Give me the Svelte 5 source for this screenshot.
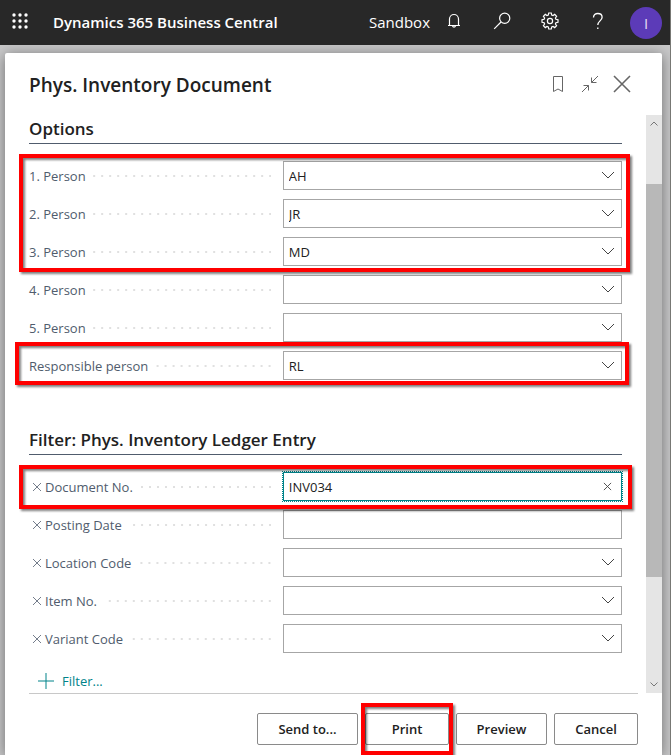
<script>
  const people = $state([
    { id: 'person1', label: '1. Person', value: 'AH' },
    { id: 'person2', label: '2. Person', value: 'JR' },
    { id: 'person3', label: '3. Person', value: 'MD' },
    { id: 'person4', label: '4. Person', value: '' },
    { id: 'person5', label: '5. Person', value: '' },
    { id: 'responsible', label: 'Responsible person', value: 'RL' }
  ]);
  const filters = $state([
    { id: 'posting', label: 'Posting Date', value: '', type: 'text' },
    { id: 'location', label: 'Location Code', value: '', type: 'select' },
    { id: 'item', label: 'Item No.', value: '', type: 'select' },
    { id: 'variant', label: 'Variant Code', value: '', type: 'select' }
  ]);
  let documentNo = $state('INV034');
  const codes = ['', 'AH', 'JR', 'MD', 'RL'];
</script>

{#snippet cross(size)}
  <svg width={size} height={size} viewBox="0 0 10 10" aria-hidden="true"><path d="M1 1l8 8M9 1L1 9" /></svg>
{/snippet}

{#snippet dropdown(field, options)}
  <span class="control">
    <select id={field.id} bind:value={field.value}>
      {#each options as option}<option value={option}>{option}</option>{/each}
    </select>
    <svg class="chevron" width="14" height="8" viewBox="0 0 14 8" aria-hidden="true"><path d="M1 1l6 6 6-6" /></svg>
  </span>
{/snippet}

{#snippet personRow(field)}
  <div class="row">
    <label for={field.id}>{field.label}</label>
    <span class="leader"></span>
    {@render dropdown(field, codes)}
  </div>
{/snippet}

<div class="app">
  <header class="topbar">
    <button class="waffle" aria-label="App launcher">
      <svg width="16" height="16" viewBox="0 0 16 16" aria-hidden="true">
        {#each [2, 8, 14] as y}{#each [2, 8, 14] as x}<circle cx={x} cy={y} r="1.7" />{/each}{/each}
      </svg>
    </button>
    <a class="brand" href="#home">Dynamics 365 Business Central</a>
    <span class="environment">Sandbox</span>
    <nav class="tools">
      <button aria-label="Notifications">
        <svg width="16" height="18" viewBox="0 0 16 18"><path d="M3.500 13V7a4.500 4.500 0 0 1 9 0v6M2 13.500h12M6.500 14a1.600 1.600 0 0 0 3 0" /></svg>
      </button>
      <button aria-label="Search">
        <svg width="18" height="18" viewBox="0 0 18 18"><circle cx="11.700" cy="6.300" r="5.100" /><path d="M8 10L1.200 16.800" /></svg>
      </button>
      <button aria-label="Settings">
        <svg width="18" height="18" viewBox="0 0 18 18">
          <path d="M7.700 1h2.600l.4 2.100 1.300.5 1.700-1.200 1.900 1.900-1.200 1.700.5 1.300 2.100.4v2.600l-2.100.4-.5 1.300 1.200 1.700-1.900 1.900-1.700-1.200-1.300.5-.4 2.100H7.700l-.4-2.100-1.300-.5-1.700 1.200-1.900-1.900 1.200-1.700-.5-1.300L1 10.300V7.700l2.100-.4.5-1.300-1.200-1.700 1.900-1.900L6 3.600l1.300-.5z" />
          <circle cx="9" cy="9" r="2.600" />
        </svg>
      </button>
      <button aria-label="Help">
        <svg width="12" height="18" viewBox="0 0 12 18"><path stroke-width="1.300" d="M1.500 5.500C1.500 3 3.300 1.500 5.800 1.500s4.300 1.500 4.300 3.700c0 3.600-4.300 3.800-4.300 7.800M5.800 15.500v1.500" /></svg>
      </button>
      <button aria-label="Account"><span class="avatar">I</span></button>
    </nav>
  </header>

  <div class="backdrop">
    <section class="dialog" aria-labelledby="dialog-title">
      <div class="titlebar">
        <h1 id="dialog-title">Phys. Inventory Document</h1>
        <button aria-label="Bookmark">
          <svg width="16" height="18" viewBox="0 0 16 18"><path d="M3.500 1.500h9v15L8 14l-4.500 2.500z" /></svg>
        </button>
        <button aria-label="Collapse">
          <svg width="18" height="18" viewBox="0 0 18 18"><path d="M17 1l-6.500 6.500M10.500 2.500v5h5M1 17l6.500-6.500M2.500 10.500h5v5" /></svg>
        </button>
        <button class="close" aria-label="Close">{@render cross(20)}</button>
      </div>

      <div class="scroller">
        <div class="content">
          <h2>Options</h2>
          <div class="fields">
            <div class="fields mark mark-people">
              {#each people.slice(0, 3) as field}{@render personRow(field)}{/each}
            </div>
            {#each people.slice(3, 5) as field}{@render personRow(field)}{/each}
            <div class="mark mark-responsible">{@render personRow(people[5])}</div>
          </div>

          <h2 class="second">Filter: Phys. Inventory Ledger Entry</h2>
          <div class="fields">
            <div class="row mark mark-document">
              <button class="remove" aria-label="Remove Document No. filter">{@render cross(10)}</button>
              <label for="document">Document No.</label>
              <span class="leader"></span>
              <span class="control active">
                <input id="document" type="text" bind:value={documentNo} />
                <button class="clear" aria-label="Clear" onclick={() => (documentNo = '')}>{@render cross(9)}</button>
              </span>
            </div>
            {#each filters as field}
              <div class="row">
                <button class="remove" aria-label="Remove {field.label} filter">{@render cross(10)}</button>
                <label for={field.id}>{field.label}</label>
                <span class="leader"></span>
                {#if field.type === 'text'}
                  <span class="control"><input id={field.id} type="text" bind:value={field.value} /></span>
                {:else}
                  {@render dropdown(field, [''])}
                {/if}
              </div>
            {/each}
          </div>
          <button class="add">
            <svg width="16" height="16" viewBox="0 0 16 16" aria-hidden="true"><path d="M8 0v16M0 8h16" /></svg>
            Filter...
          </button>
        </div>
        <div class="scrollbar" aria-hidden="true">
          <svg width="8" height="5" viewBox="0 0 8 5"><path d="M0.500 4.500L4 1l3.500 3.500" /></svg>
          <div class="track"><div class="before"></div><div class="thumb"></div><div class="after"></div></div>
          <svg width="8" height="5" viewBox="0 0 8 5"><path d="M0.500 0.500L4 4l3.500-3.500" /></svg>
        </div>
      </div>

      <footer>
        <button class="wide">Send to...</button>
        <span class="mark mark-print"><button>Print</button></span>
        <button class="medium">Preview</button>
        <button>Cancel</button>
      </footer>
    </section>
  </div>
</div>

<style>
  :global(body) {
    background: #777874;
  }
  .app {
    display: flex;
    flex-direction: column;
    min-height: 100vh;
    margin-right: 1px;
    overflow: hidden;
    font: 13px/20px 'Open Sans', 'Noto Sans', sans-serif;
    color: #212121;
  }
  .app,
  .app *,
  .app *::after {
    box-sizing: border-box;
  }
  button {
    display: flex;
    align-items: center;
    justify-content: center;
    padding: 0;
    border: 0;
    background: none;
    color: inherit;
    font: inherit;
    cursor: pointer;
  }
  svg {
    display: block;
    flex: none;
    fill: none;
    stroke: currentColor;
  }
  .topbar {
    display: flex;
    align-items: center;
    height: 45px;
    flex: none;
    padding-bottom: 2px;
    background: #282828;
    color: #fff;
  }
  .waffle {
    width: 40px;
    height: 42px;
    align-self: flex-start;
  }
  .waffle svg {
    fill: #fff;
    stroke: none;
  }
  .brand {
    margin-left: 13px;
    font-size: 15px;
    font-weight: 600;
    color: #fff;
    text-decoration: none;
  }
  .environment {
    margin-left: auto;
    font-size: 15px;
  }
  .tools {
    display: flex;
    align-items: center;
    align-self: flex-start;
  }
  .tools button {
    width: 48px;
    height: 42px;
  }
  .tools svg {
    stroke-width: 1.2;
  }
  .avatar {
    width: 32px;
    height: 32px;
    margin-top: 4px;
    border-radius: 50%;
    background: #5c3bb8;
    line-height: 32px;
    font-size: 15px;
    text-align: center;
    color: #e4dcf5;
  }
  .backdrop {
    display: flex;
    flex: 1;
    padding: 8px 8px 0 5px;
    background: #c8c8c9;
    overflow: hidden;
  }
  .dialog {
    display: flex;
    flex: 1;
    flex-direction: column;
    min-width: 0;
    border-radius: 2px 2px 0 0;
    background: #fff;
    box-shadow: 0 2px 14px rgba(0, 0, 0, 0.45);
  }
  .titlebar {
    display: flex;
    align-items: center;
    height: 62px;
    flex: none;
    padding: 0 24px;
    color: #666;
  }
  .titlebar button {
    width: 32px;
    height: 32px;
  }
  .close svg {
    stroke-width: 0.8;
  }
  h1 {
    flex: 1;
    margin: 0;
    padding-top: 2px;
    font-size: 19px;
    line-height: 28px;
    font-weight: 600;
    color: #212121;
  }
  .scroller {
    display: flex;
    flex: 1;
  }
  .content {
    flex: 1;
    min-width: 0;
    padding: 0 24px;
  }
  h2 {
    margin: 0 0 17px;
    border-bottom: 1px solid #505c6d;
    font-size: 17px;
    line-height: 28px;
    font-weight: 600;
  }
  .second {
    margin-top: 46px;
  }
  .fields {
    display: flex;
    flex-direction: column;
    gap: 9px;
  }
  .row {
    display: flex;
    align-items: center;
    height: 29px;
  }
  label {
    color: #505c6d;
  }
  .leader {
    flex: 1;
    height: 2px;
    margin: 0 12px 0 7px;
    background: linear-gradient(to right, transparent 6px, #e0e0e0 6px) right / 8px 2px repeat-x;
  }
  .control {
    display: flex;
    position: relative;
    width: 57.2%;
    height: 29px;
  }
  select,
  input {
    flex: 1;
    min-width: 0;
    margin: 0;
    padding: 0 24px 0 5px;
    appearance: none;
    border: 1px solid #a6a6a6;
    border-radius: 0;
    outline: none;
    background: #fff;
    color: #212121;
    font: inherit;
  }
  .chevron {
    position: absolute;
    top: 10px;
    right: 7px;
    pointer-events: none;
    color: #444;
  }
  .active input {
    border-color: #00838a;
    outline: 1px dotted #00838a;
  }
  .clear {
    position: absolute;
    top: 5px;
    right: 5px;
    width: 19px;
    height: 19px;
    color: #444;
  }
  .remove {
    width: 16px;
    height: 24px;
    color: #505c6d;
  }
  .remove svg {
    stroke-width: 0.8;
  }
  .add {
    gap: 8px;
    height: 24px;
    margin: 16px 0 0 9px;
    color: #00838a;
  }
  .scrollbar {
    display: flex;
    flex-direction: column;
    align-items: center;
    width: 16px;
    padding: 6px 0;
    background: #e5e5e5;
    color: #777;
  }
  .track {
    display: flex;
    flex: 1;
    flex-direction: column;
    width: 16px;
  }
  .before {
    flex: 58;
  }
  .thumb {
    flex: 393;
    background: #b8b8b8;
  }
  .after {
    flex: 105;
  }
  footer {
    display: flex;
    justify-content: flex-end;
    gap: 7px;
    height: 62px;
    flex: none;
    margin: 0 24px;
    padding-top: 19px;
    border-top: 1px solid #c8c8c8;
  }
  footer button {
    width: 84px;
    height: 32px;
    border: 1px solid #8a8a8a;
    border-radius: 2px;
    font-weight: 600;
  }
  footer .medium {
    width: 91px;
  }
  footer .wide {
    width: 101px;
  }
  /* Red callout frames over the highlighted parts */
  .mark {
    position: relative;
  }
  .mark::after {
    content: '';
    position: absolute;
    z-index: 1;
    border: 4px solid #f00;
    filter: drop-shadow(2px 2px 1px rgba(0, 0, 0, 0.5));
    pointer-events: none;
  }
  .mark-people::after {
    inset: -7px -8px -6px -10px;
  }
  .mark-responsible::after {
    inset: -9px -7px -5px -14px;
  }
  .mark-document::after {
    inset: -7px -10px -8px -10px;
  }
  .mark-print::after {
    inset: -10px -4px 0 -4px;
  }
</style>
